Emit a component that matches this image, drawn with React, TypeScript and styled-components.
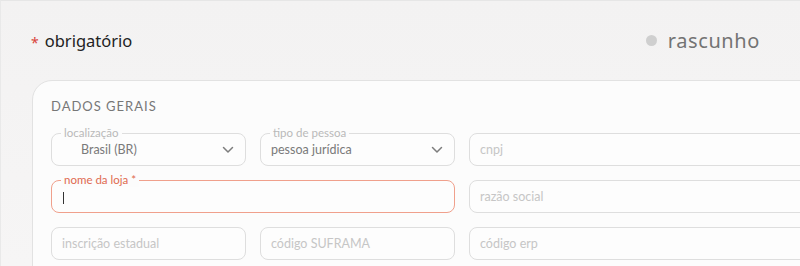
import React from "react";
import styled, { createGlobalStyle } from "styled-components";

const Global = createGlobalStyle`
  html, body { margin: 0; padding: 0; }
  body {
    width: 800px;
    height: 266px;
    overflow: hidden;
    background: linear-gradient(180deg, #f3f2f2 0%, #f6f5f5 100%);
    font-family: "Noto Sans", "Open Sans", sans-serif;
  }
`;

const Page = styled.div`
  width: 800px;
  height: 266px;
  box-sizing: border-box;
  border-top: 1px solid #e6e6e6;
  border-left: 1px solid #e9e9e9;
  overflow: hidden;
`;

const Header = styled.div`
  display: flex;
  align-items: center;
  justify-content: space-between;
  height: 79px;
  padding: 0 40px 0 30px;
  box-sizing: border-box;
`;

const Required = styled.div`
  display: flex;
  align-items: center;
  gap: 6px;
  font-size: 16.5px;
  color: #222;
`;

const Star = styled.span`
  color: #d9443a;
  font-size: 14px;
  margin-top: 4px;
`;

const Status = styled.div`
  display: flex;
  align-items: center;
  gap: 11px;
  font-size: 20px;
  color: #737373;
  letter-spacing: 0.6px;
`;

const Dot = styled.span`
  width: 11px;
  height: 11px;
  border-radius: 50%;
  background: #cfcfcf;
`;

const Card = styled.section`
  margin-left: 31px;
  width: 900px;
  height: 220px;
  box-sizing: border-box;
  background: #fcfcfc;
  border: 1px solid #e2e2e2;
  border-radius: 20px;
  padding: 17px 18px;
  font-family: Lato, "Noto Sans", sans-serif;
`;

const Title = styled.h2`
  margin: 0 0 18px;
  font-size: 13px;
  font-weight: 400;
  letter-spacing: 1px;
  color: #777;
  line-height: 17px;
`;

const Grid = styled.div`
  display: grid;
  grid-template-columns: 195px 195px 1fr;
  grid-auto-rows: 33px;
  column-gap: 14px;
  row-gap: 14px;
`;

const Field = styled.div<{ $span?: number; $active?: boolean }>`
  position: relative;
  grid-column: span ${(p) => p.$span ?? 1};
  display: flex;
  align-items: center;
  box-sizing: border-box;
  border: 1px solid ${(p) => (p.$active ? "#f0a08c" : "#dedede")};
  border-radius: 8px;
  background: #fdfdfd;
  padding: 0 11px 0 10px;
`;

const Label = styled.span<{ $active?: boolean }>`
  position: absolute;
  top: -8px;
  left: 9px;
  padding: 0 3px;
  background: #fcfcfc;
  font-size: 11.5px;
  line-height: 14px;
  color: ${(p) => (p.$active ? "#e06a50" : "#b9b9b9")};
`;

const Value = styled.span<{ $indent?: boolean; $placeholder?: boolean }>`
  flex: 1;
  font-size: 12.5px;
  color: ${(p) => (p.$placeholder ? "#c6c6c6" : "#7a7a7a")};
  padding-left: ${(p) => (p.$indent ? "19px" : "0")};
  white-space: nowrap;
`;

const Caret = styled.span`
  width: 1px;
  height: 12px;
  background: #333;
  margin-left: 1px;
  margin-top: 2px;
`;

const Chevron = () => (
  <svg width="12" height="8" viewBox="0 0 12 8" fill="none">
    <path d="M1.5 1.5 L6 6 L10.5 1.5" stroke="#7d7d7d" strokeWidth="1.5" strokeLinecap="round" strokeLinejoin="round" />
  </svg>
);

export default function App() {
  return (
    <>
      <Global />
      <Page>
        <Header>
          <Required>
            <Star>*</Star>
            <span>obrigatório</span>
          </Required>
          <Status>
            <Dot />
            <span>rascunho</span>
          </Status>
        </Header>
        <Card>
          <Title>DADOS GERAIS</Title>
          <Grid>
            <Field>
              <Label>localização</Label>
              <Value $indent>Brasil (BR)</Value>
              <Chevron />
            </Field>
            <Field>
              <Label>tipo de pessoa</Label>
              <Value>pessoa jurídica</Value>
              <Chevron />
            </Field>
            <Field>
              <Value $placeholder>cnpj</Value>
            </Field>
            <Field $span={2} $active>
              <Label $active>nome da loja *</Label>
              <Caret />
            </Field>
            <Field>
              <Value $placeholder>razão social</Value>
            </Field>
            <Field>
              <Value $placeholder>inscrição estadual</Value>
            </Field>
            <Field>
              <Value $placeholder>código SUFRAMA</Value>
            </Field>
            <Field>
              <Value $placeholder>código erp</Value>
            </Field>
          </Grid>
        </Card>
      </Page>
    </>
  );
}
